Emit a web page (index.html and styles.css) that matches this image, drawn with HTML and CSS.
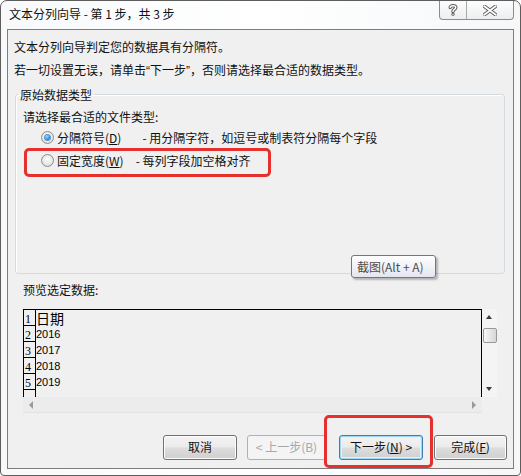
FILE: index.html
```html
<!DOCTYPE html>
<html lang="zh-CN">
<head>
<meta charset="utf-8">
<title>文本分列向导</title>
<link rel="stylesheet" href="styles.css">
</head>
<body>
<div class="window">
  <div class="titlebar">
    <span class="title">文本分列向导 - 第 1 步，共 3 步</span>
    <div class="caption-btns">
      <span class="cap cap-help">
        <svg width="10" height="12" viewBox="0 0 10 12"><path d="M2.2 3.6 C2.2 1.2 7.8 1.2 7.8 3.6 C7.8 5.4 5 5.4 5 7.4" fill="none" stroke="#5a5a5a" stroke-width="3.4" stroke-linecap="round"/><circle cx="5" cy="10.2" r="1.6" fill="#5a5a5a"/><path d="M2.2 3.6 C2.2 1.2 7.8 1.2 7.8 3.6 C7.8 5.4 5 5.4 5 7.4" fill="none" stroke="#fff" stroke-width="1.4" stroke-linecap="round"/><circle cx="5" cy="10.2" r="0.7" fill="#fff"/></svg>
      </span>
      <span class="cap cap-close">
        <svg width="14" height="11" viewBox="0 0 14 11"><path d="M1 1 L13 10 M13 1 L1 10" fill="none" stroke="#5a5a5a" stroke-width="3.6" stroke-linecap="round"/><path d="M1 1 L13 10 M13 1 L1 10" fill="none" stroke="#fff" stroke-width="1.6" stroke-linecap="round"/></svg>
      </span>
    </div>
  </div>
  <div class="client">
    <div class="line first">文本分列向导判定您的数据具有分隔符。</div>
    <div class="line second">若一切设置无误，请单击<span class="q">“</span>下一步<span class="q">”</span>，否则请选择最合适的数据类型。</div>
    <fieldset class="group">
      <legend>原始数据类型</legend>
      <div class="line prompt">请选择最合适的文件类型:</div>
      <div class="radio-row">
        <span class="radio checked"></span>
        <span class="rlabel">分隔符号(<u>D</u>)</span>
        <span class="desc desc-d">- 用分隔字符，如逗号或制表符分隔每个字段</span>
      </div>
      <div class="radio-row second-row">
        <span class="radio"></span>
        <span class="rlabel">固定宽度(<u>W</u>)</span>
        <span class="desc desc-w">- 每列字段加空格对齐</span>
        <span class="highlight hl-radio"></span>
      </div>
    </fieldset>
    <div class="line preview-label">预览选定数据:</div>
    <div class="preview">
      <div class="pv-content">
        <div class="pv-row"><span class="num">1</span><span class="cell big">日期</span></div>
        <div class="pv-row"><span class="num">2</span><span class="cell">2016</span></div>
        <div class="pv-row"><span class="num">3</span><span class="cell">2017</span></div>
        <div class="pv-row"><span class="num">4</span><span class="cell">2018</span></div>
        <div class="pv-row"><span class="num">5</span><span class="cell">2019</span></div>
        <div class="pv-row"><span class="num"></span><span class="cell"></span></div>
      </div>
      <div class="vscroll">
        <span class="arrow up"></span>
        <span class="thumb"></span>
        <span class="arrow down"></span>
      </div>
      <div class="hscroll">
        <span class="arrow left"></span>
        <span class="arrow right"></span>
      </div>
      <div class="corner"></div>
    </div>
    <div class="buttons">
      <button class="btn w-cancel">取消</button>
      <button class="btn w-back" disabled>&lt; 上一步(B)</button>
      <span class="btn-wrap">
        <button class="btn w-next default">下一步(<u>N</u>) &gt;</button>
        <span class="highlight hl-next"></span>
      </span>
      <button class="btn w-finish">完成(<u>F</u>)</button>
    </div>
    <div class="tooltip">截图(Alt + A)</div>
  </div>
</div>
</body>
</html>
```

FILE: styles.css
```css
* { box-sizing: border-box; }
html, body { margin: 0; padding: 0; background: #fff; overflow: hidden; }
body {
  font-family: "Noto Sans CJK SC", "Microsoft YaHei", sans-serif;
  font-size: 12px;
  color: #111;
}
.window {
  width: 521px;
  height: 476px;
  border: 1px solid #5d5d5d;
  border-radius: 7px 7px 4px 4px;
  background: linear-gradient(90deg, #f7f9fb 0%, #ffffff 50%, #f5f7f9 100%);
  display: flex;
  flex-direction: column;
}
.titlebar {
  height: 28px;
  display: flex;
  align-items: flex-start;
  justify-content: space-between;
  padding-left: 8px;
}
.title {
  line-height: 26px;
  font-size: 12px;
  color: #111;
}
.caption-btns {
  display: flex;
  margin-right: 6px;
  height: 19px;
  border: 1px solid #8c8c8c;
  border-top: none;
  border-radius: 0 0 4px 4px;
  background: linear-gradient(#fdfdfd, #eceef0);
}
.cap {
  display: flex;
  align-items: center;
  justify-content: center;
  height: 18px;
}
.cap-help { width: 27px; border-right: 1px solid #a9a9a9; }
.cap-close { width: 46px; }

.client {
  position: relative;
  margin: 0 6px 6px;
  height: 441px;
  border: 1px solid #7d7d7d;
  background: #f0f0f0;
  display: flex;
  flex-direction: column;
}
.line { line-height: 20px; white-space: nowrap; }
.first { margin: 7px 0 0 6px; }
.second { margin: 3px 0 0 6px; }
.q { font-family: "Liberation Sans", sans-serif; }

.group {
  margin: 4px 8px 0 7px;
  height: 189px;
  padding: 2px 0 0 7px;
  border: 1px solid #d3dbe1;
  border-radius: 3px;
  box-shadow: inset 1px 1px 0 #fff;
}
.group legend {
  padding: 0 2px;
  margin-left: -5px;
  line-height: 20px;
}
.prompt { margin: 0; }
.radio-row {
  position: relative;
  display: flex;
  align-items: center;
  height: 20px;
  margin-top: 1px;
  white-space: nowrap;
}
.second-row { margin-top: 3px; }
.radio {
  width: 13px;
  height: 13px;
  margin-left: 18px;
  border-radius: 50%;
  border: 1px solid #8d8d8d;
  background: radial-gradient(circle at 50% 40%, #fdfdfd 0%, #e6e6e6 60%, #d2d2d2 100%);
  display: flex;
  align-items: center;
  justify-content: center;
}
.radio.checked::after {
  content: "";
  width: 5px;
  height: 5px;
  border-radius: 50%;
  background: radial-gradient(circle at 40% 35%, #a8d9ff 0%, #2f86d6 60%, #1560a8 100%);
  box-shadow: 0 0 0 1px #5c9bd6;
}
.rlabel { margin-left: 3px; }
.desc-d { margin-left: 21px; }
.desc-w { margin-left: 12px; }

.highlight {
  position: absolute;
  border: 3px solid #e5302d;
  border-radius: 5px;
  pointer-events: none;
}
.hl-radio { left: 1px; top: -3px; width: 247px; height: 29px; }

.preview-label { margin: 6px 0 0 15px; }
.preview {
  margin: 9px 0 0 15px;
  width: 474px;
  height: 104px;
  display: grid;
  grid-template-columns: 459px 15px;
  grid-template-rows: 88px 16px;
}
.pv-content {
  border: 1px solid #000;
  border-bottom: none;
  overflow: hidden;
  background: #f0f0f0;
}
.pv-row {
  display: flex;
  height: 16px;
}
.num {
  width: 12px;
  flex: none;
  height: 16px;
  border-right: 1px solid #000;
  border-bottom: 1px solid #000;
  font-family: "Liberation Serif", serif;
  font-size: 12px;
  line-height: 19px;
  padding-left: 1px;
  color: #000;
}
.cell {
  font-family: "Liberation Sans", sans-serif;
  font-size: 11px;
  line-height: 17px;
  color: #000;
}
.cell.big {
  font-family: "Noto Sans CJK SC", sans-serif;
  font-size: 14px;
  line-height: 16px;
}
.vscroll {
  position: relative;
  background: #f4f4f4;
}
.thumb {
  position: absolute;
  top: 19px;
  left: 1px;
  width: 14px;
  height: 15px;
  border: 1px solid #979797;
  border-radius: 2px;
  background: linear-gradient(90deg, #f7f7f7, #e4e4e4 60%, #d6d6d6);
}
.arrow { position: absolute; width: 0; height: 0; }
.arrow.up { top: 6px; left: 4px; border: 3.5px solid transparent; border-top: none; border-bottom: 4px solid #3c3c3c; }
.arrow.down { bottom: 6px; left: 4px; border: 3.5px solid transparent; border-bottom: none; border-top: 4px solid #3c3c3c; }
.hscroll {
  position: relative;
  background: #ececec;
  border-bottom: 1px solid #e4e4e4;
}
.arrow.left { left: 6px; top: 4px; border: 4px solid transparent; border-left: none; border-right: 4px solid #9a9a9a; }
.arrow.right { right: 6px; top: 4px; border: 4px solid transparent; border-right: none; border-left: 4px solid #9a9a9a; }
.corner { background: #f0f0f0; }

.buttons {
  margin-top: 22px;
  display: flex;
  justify-content: flex-end;
  padding-right: 6px;
}
.btn {
  height: 25px;
  font-family: "Noto Sans CJK SC", sans-serif;
  font-size: 12px;
  color: #111;
  border: 1px solid #707070;
  border-radius: 3px;
  background: linear-gradient(#f3f3f3 0%, #ebebeb 48%, #dddddd 52%, #cfcfcf 100%);
  box-shadow: inset 0 0 0 1px #fcfcfc;
  padding: 0;
  line-height: 20px;
}
.btn:disabled {
  color: #a8a8a8;
  border-color: #adb2b5;
  background: #f4f4f4;
  box-shadow: none;
}
.btn.default {
  border-color: #3c7fb1;
  box-shadow: inset 0 0 0 1px #9fd6f3, inset 0 0 0 2px #dff2fc;
}
.w-cancel { width: 74px; }
.w-back { width: 79px; margin-left: 10px; }
.btn-wrap { position: relative; margin-left: 13px; display: flex; }
.w-next { width: 84px; }
.w-finish { width: 73px; margin-left: 11px; }
.hl-next { left: -15px; top: -20px; width: 109px; height: 53px; }

.tooltip {
  position: absolute;
  left: 343px;
  top: 225px;
  width: 85px;
  height: 23px;
  padding-left: 5px;
  border: 1px solid #767676;
  border-radius: 3px;
  background: linear-gradient(#ffffff, #e4e5f0);
  box-shadow: 2px 2px 2px rgba(0,0,0,0.25);
  line-height: 21px;
  font-size: 12px;
  color: #4c4c4c;
  white-space: nowrap;
}
```
